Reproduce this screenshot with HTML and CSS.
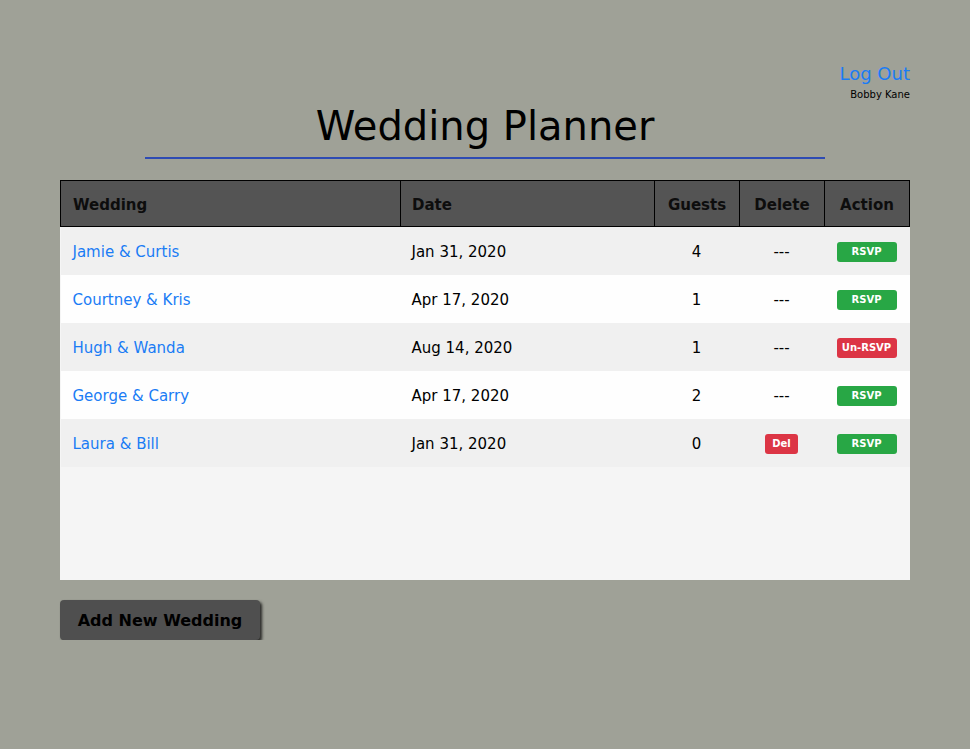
FILE: index.html
```html
<!DOCTYPE html>
<html>
<head>
<meta charset="utf-8">
<link rel="stylesheet" href="styles.css">
</head>
<body>
<div class="page">
  <div class="user">
    <a class="logout" href="#">Log Out</a>
    <div class="name">Bobby Kane</div>
  </div>
  <h1 class="title">Wedding Planner</h1>
  <div class="rule"></div>
  <div class="panel">
    <table class="grid">
      <thead>
        <tr>
          <th class="c-wed">Wedding</th>
          <th class="c-date">Date</th>
          <th class="c-num">Guests</th>
          <th class="c-num">Delete</th>
          <th class="c-num">Action</th>
        </tr>
      </thead>
      <tbody>
        <tr><td class="c-wed"><a href="#">Jamie &amp; Curtis</a></td><td>Jan 31, 2020</td><td class="c-num">4</td><td class="c-num">---</td><td class="c-num"><span class="badge ok wide">RSVP</span></td></tr>
        <tr><td class="c-wed"><a href="#">Courtney &amp; Kris</a></td><td>Apr 17, 2020</td><td class="c-num">1</td><td class="c-num">---</td><td class="c-num"><span class="badge ok wide">RSVP</span></td></tr>
        <tr><td class="c-wed"><a href="#">Hugh &amp; Wanda</a></td><td>Aug 14, 2020</td><td class="c-num">1</td><td class="c-num">---</td><td class="c-num"><span class="badge bad wide">Un-RSVP</span></td></tr>
        <tr><td class="c-wed"><a href="#">George &amp; Carry</a></td><td>Apr 17, 2020</td><td class="c-num">2</td><td class="c-num">---</td><td class="c-num"><span class="badge ok wide">RSVP</span></td></tr>
        <tr><td class="c-wed"><a href="#">Laura &amp; Bill</a></td><td>Jan 31, 2020</td><td class="c-num">0</td><td class="c-num"><span class="badge bad">Del</span></td><td class="c-num"><span class="badge ok wide">RSVP</span></td></tr>
      </tbody>
    </table>
  </div>
  <button class="add">Add New Wedding</button>
</div>
</body>
</html>
```

FILE: styles.css
```css
html, body {
  margin: 0;
  padding: 0;
  background: #9fa197;
  font-family: "DejaVu Sans", Verdana, sans-serif;
}
.page {
  width: 850px;
  margin: 0 auto;
  padding: 62px 0 0 0;
  display: flex;
  flex-direction: column;
}
.user {
  display: flex;
  flex-direction: column;
  align-items: flex-end;
}
.logout {
  color: #1a7cf5;
  text-decoration: none;
  font-size: 18px;
  line-height: 23px;
}
.name {
  font-size: 10px;
  line-height: 12px;
  margin-top: 4px;
  margin-bottom: -1px;
  color: #000;
}
.title {
  margin: 0;
  text-align: center;
  font-family: "DejaVu Sans", sans-serif;
  font-weight: normal;
  font-size: 40px;
  line-height: 52px;
  color: #000;
}
.rule {
  width: 680px;
  height: 2px;
  background: #2e4bb3;
  margin: 5px auto 0 auto;
}
.panel {
  margin-top: 21px;
  height: 400px;
  background: #f5f5f5;
}
.grid {
  width: 100%;
  border-collapse: collapse;
  font-size: 15px;
}
.grid th {
  background: #545454;
  border: 1px solid #000;
  height: 43px;
  padding: 2px 12px 0 12px;
  text-align: left;
  font-weight: bold;
  color: #0d0d0d;
}
.grid th.c-wed { width: 315px; }
.grid th.c-date { width: 230px; padding-left: 11px; }
.grid th.c-num { text-align: center; width: 60px; }
.grid td {
  height: 47px;
  padding: 1px 12px 0 11px;
  color: #000;
}
.grid td.c-wed { padding-left: 12px; }
.grid td.c-num { text-align: center; }
.grid tbody tr:nth-child(odd) { background: #f0f0f0; }
.grid tbody tr:nth-child(even) { background: #fefefe; }
.grid a {
  color: #1a7cf5;
  text-decoration: none;
}
.badge {
  display: inline-block;
  height: 20px;
  line-height: 20px;
  padding: 0 7px;
  border-radius: 3px;
  color: #fff;
  font-size: 10px;
  font-weight: bold;
  vertical-align: middle;
}
.badge.wide { width: 60px; padding: 0; box-sizing: border-box; }
.badge.ok { background: #28a745; }
.badge.bad { background: #dc3545; }
.add {
  align-self: flex-start;
  margin-top: 20px;
  width: 200px;
  height: 40px;
  background: #4f4f4f;
  border: none;
  border-radius: 4px;
  box-shadow: 2px 2px 3px rgba(0,0,0,0.75);
  font-family: "DejaVu Sans", Verdana, sans-serif;
  font-weight: bold;
  font-size: 16px;
  color: #000;
  cursor: pointer;
}
```
